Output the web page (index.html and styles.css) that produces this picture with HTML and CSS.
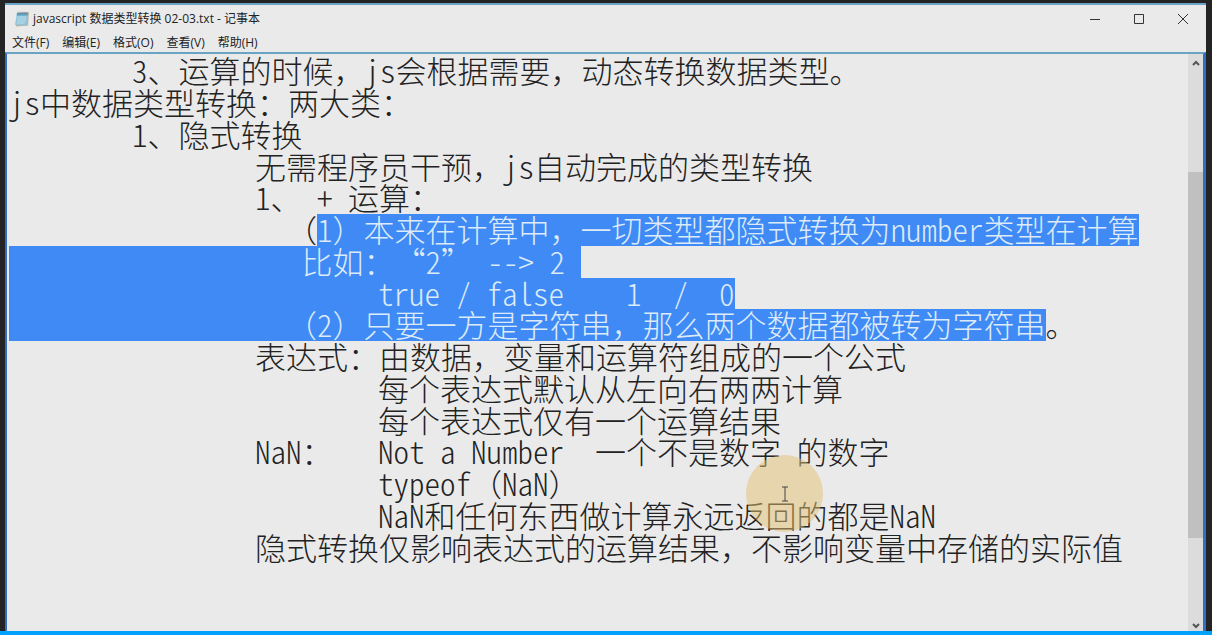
FILE: index.html
```html
<!DOCTYPE html>
<html lang="zh-CN">
<head>
<meta charset="utf-8">
<title>javascript 数据类型转换 02-03.txt - 记事本</title>
<link rel="stylesheet" href="styles.css">
</head>
<body>
<div class="desktop">
  <main class="window">
    <header class="titlebar">
      <svg class="app-icon" viewBox="0 0 16 16" aria-hidden="true">
        <path d="M4 2 15 1l-1 13.500-12 1z" fill="#b9b39c"/>
        <path d="M3 2h11l-1.500 12.500L1 14z" fill="#8fc3dc"/>
        <path d="M3 2h11l-.3 2.500h-11z" fill="#5e9fbd"/>
        <path d="M3.500 6h9M3.200 8h9M3 10h9M2.700 12h8" stroke="#c6e4f0" stroke-width=".8"/>
        <path d="M4 .8v2M6 .8v2M8 .8v2M10 .8v2M12 .8v2" stroke="#6d7f88" stroke-width=".8"/>
      </svg>
      <h1 class="title">javascript 数据类型转换 02-03.txt - 记事本</h1>
      <button class="control" type="button" aria-label="最小化"><svg viewBox="0 0 12 12"><path d="M1 6.500h10"/></svg></button>
      <button class="control" type="button" aria-label="最大化"><svg viewBox="0 0 12 12"><path d="M1.500 1.500h9v9h-9z"/></svg></button>
      <button class="control" type="button" aria-label="关闭"><svg viewBox="0 0 12 12"><path d="M1 1l10 10M11 1 1 11"/></svg></button>
    </header>
    <nav class="menubar">
      <button type="button">文件(F)</button>
      <button type="button">编辑(E)</button>
      <button type="button">格式(O)</button>
      <button type="button">查看(V)</button>
      <button type="button">帮助(H)</button>
    </nav>
    <div class="editor">
      <div class="text" role="textbox" aria-multiline="true" aria-label="文本编辑器" tabindex="0">
        <div class="line">&#9;<span class="en">3</span>、运算的时候，<span class="en">js</span>会根据需要，动态转换数据类型。</div>
        <div class="line"><span class="en">js</span>中数据类型转换：两大类：</div>
        <div class="line">&#9;<span class="en">1</span>、隐式转换</div>
        <div class="line">&#9;&#9;无需程序员干预，<span class="en">js</span>自动完成的类型转换</div>
        <div class="line">&#9;&#9;<span class="en">1</span>、<span class="en"> + </span>运算：</div>
        <div class="line">&#9;&#9;<span class="en">  </span>（<mark><span class="en">1</span>）本来在计算中，一切类型都隐式转换为<span class="en">number</span>类型在计算</mark></div>
        <div class="line"><mark>&#9;&#9;<span class="en">   </span>比如：“<span class="en">2</span>”<span class="en"> --&gt; 2 </span></mark></div>
        <div class="line"><mark>&#9;&#9;&#9;<span class="en">true / false    1  /  0</span></mark></div>
        <div class="line"><mark>&#9;&#9;<span class="en">  </span>（<span class="en">2</span>）只要一方是字符串，那么两个数据都被转为字符串</mark>。</div>
        <div class="line">&#9;&#9;表达式：由数据，变量和运算符组成的一个公式</div>
        <div class="line">&#9;&#9;&#9;每个表达式默认从左向右两两计算</div>
        <div class="line">&#9;&#9;&#9;每个表达式仅有一个运算结果</div>
        <div class="line">&#9;&#9;<span class="en">NaN</span>：&#9;<span class="en">Not a Number  </span>一个不是数字<span class="en"> </span>的数字</div>
        <div class="line">&#9;&#9;&#9;<span class="en">typeof</span>（<span class="en">NaN</span>）</div>
        <div class="line">&#9;&#9;&#9;<span class="en">NaN</span>和任何东西做计算永远返回的都是<span class="en">NaN</span></div>
        <div class="line">&#9;&#9;隐式转换仅影响表达式的运算结果，不影响变量中存储的实际值</div>
      </div>
      <div class="scrollbar">
        <button class="arrow" type="button" aria-label="向上滚动"><svg viewBox="0 0 8 6"><path d="M1 5l3-3 3 3"/></svg></button>
        <div class="track"><div class="thumb"></div></div>
        <button class="arrow down" type="button" aria-label="向下滚动"><svg viewBox="0 0 8 6"><path d="M1 1l3 3 3-3"/></svg></button>
      </div>
      <div class="pointer">
        <svg viewBox="0 0 8 16" aria-hidden="true"><path d="M1 1h6M4 1v14M1 15h6"/></svg>
      </div>
    </div>
  </main>
</div>
</body>
</html>
```
FILE: styles.css
```css
* {
  box-sizing: border-box;
}

body {
  margin: 0;
  min-height: 100vh;
  display: flex;
  flex-direction: column;
  background: #242424;
  border-bottom: 4px solid #00a2ff;
  font: 12px/18px "Open Sans", "Noto Sans CJK SC", sans-serif;
  color: #222;
}

button {
  padding: 0;
  border: 0;
  background: none;
  color: inherit;
  font: inherit;
}

svg {
  display: block;
  fill: none;
  stroke: none;
}

.desktop {
  flex: 1;
  display: flex;
  padding: 3px 6px 0 5px;
}

.window {
  flex: 1;
  min-width: 0;
  display: flex;
  flex-direction: column;
  background: #eaeaea;
  border-top: 2px solid #6aa4c4;
}

.titlebar {
  display: flex;
  align-items: center;
  height: 28px;
  padding: 0 1px 0 9px;
}

.app-icon {
  width: 16px;
  height: 16px;
}

.title {
  flex: 1;
  margin: 0 0 0 3px;
  font-size: 12px;
  font-weight: 400;
}

.control {
  display: grid;
  place-items: center;
  width: 44px;
  height: 28px;
}

.control svg {
  width: 12px;
  height: 12px;
  stroke: #333;
}

.menubar {
  display: flex;
  gap: 13px;
  padding: 1px 7px 0;
}

.editor {
  position: relative;
  flex: 1;
  display: flex;
  border: solid #2f6fc4;
  border-width: 2px 3px 0 2px;
  border-top-color: #6aa4c4;
}

.text {
  flex: 1;
  min-width: 0;
  overflow: hidden;
  padding: 1px 2px 64px;
  font: 300 31px/30px "Noto Sans CJK SC", sans-serif;
  text-spacing-trim: space-all;
  color: #222;
  outline: 0;
}

.line {
  height: 32px;
  white-space: pre;
  tab-size: 123px;
}

.line:nth-child(4n) {
  height: 31px;
}

.en {
  font-feature-settings: "hwid";
}

mark {
  display: inline-block;
  height: 100%;
  vertical-align: top;
  background: #3f8af5;
  color: #dcebf7;
}

.scrollbar {
  display: flex;
  flex-direction: column;
  width: 15px;
  background: #dcdcdc;
}

.arrow {
  display: grid;
  place-items: center;
  height: 18px;
}

.arrow.down {
  height: 10px;
}

.arrow svg {
  width: 8px;
  height: 6px;
  stroke: #555;
  stroke-width: 2;
}

.track {
  flex: 1;
  padding-top: 100px;
}

.thumb {
  height: 366px;
  background: #c0c0c0;
}

.pointer {
  position: absolute;
  left: 739px;
  top: 401px;
  display: grid;
  place-items: center;
  width: 77px;
  height: 77px;
  border-radius: 50%;
  background: rgba(226, 192, 112, 0.5);
}

.pointer svg {
  width: 8px;
  height: 16px;
  stroke: #444;
}
```
